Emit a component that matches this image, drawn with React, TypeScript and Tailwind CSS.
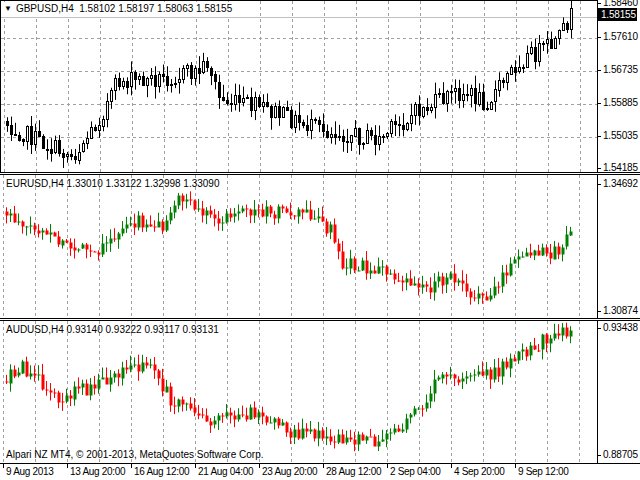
const W = 597

function rng(seed: number) {
  let s = seed
  return () => {
    s = (s * 1103515245 + 12345) % 2147483648
    return s / 2147483648
  }
}

function interp(pts: number[][], x: number) {
  for (let i = 0; i < pts.length - 1; i++) {
    const [x0, y0] = pts[i]
    const [x1, y1] = pts[i + 1]
    if (x >= x0 && x <= x1) return y0 + ((y1 - y0) * (x - x0)) / (x1 - x0)
  }
  return pts[pts.length - 1][1]
}

type Candle = { x: number; o: number; c: number; h: number; l: number }

function makeCandles(pts: number[][], seed: number, vol: number): Candle[] {
  const r = rng(seed)
  const out: Candle[] = []
  let prev = interp(pts, 5)
  for (let x = 5; x <= 571; x += 4) {
    const target = interp(pts, x + 4) + (r() - 0.5) * vol
    const o = prev
    const c = target
    const h = Math.min(o, c) - r() * vol * 0.7
    const l = Math.max(o, c) + r() * vol * 0.7
    out.push({ x, o, c, h, l })
    prev = c
  }
  return out
}

const p1 = makeCandles(
  [[5, 120], [40, 140], [75, 155], [100, 120], [120, 80], [160, 78], [200, 70], [210, 60], [222, 100], [260, 105], [300, 120], [320, 128], [380, 138], [420, 110], [460, 90], [490, 100], [520, 60], [550, 45], [560, 40], [572, 14]],
  7, 18,
)
const p2 = makeCandles(
  [[5, 36], [60, 66], [100, 80], [130, 46], [170, 50], [182, 18], [215, 46], [260, 36], [310, 36], [335, 56], [345, 86], [400, 100], [430, 112], [460, 100], [480, 126], [500, 110], [520, 82], [560, 76], [572, 62]],
  11, 14,
)
const p3 = makeCandles(
  [[5, 60], [25, 45], [60, 75], [100, 65], [150, 40], [175, 80], [215, 100], [260, 90], [290, 110], [380, 120], [420, 90], [440, 55], [470, 60], [500, 50], [530, 30], [560, 10], [572, 12]],
  23, 14,
)

function Grid({ h, rows }: { h: number; rows: number[] }) {
  const xs = Array.from({ length: 19 }, (_, i) => 3 + 32 * i)
  return (
    <g stroke="#a0a0a0" strokeDasharray="3 3" strokeWidth={1}>
      {xs.map((x) => (
        <line key={x} x1={x + 0.5} x2={x + 0.5} y1={0} y2={h} />
      ))}
      {rows.map((y) => (
        <line key={y} x1={0} x2={W} y1={y + 0.5} y2={y + 0.5} />
      ))}
    </g>
  )
}

function Candles({ data, mono }: { data: Candle[]; mono?: boolean }) {
  return (
    <g>
      {data.map((d, i) => {
        const up = d.c < d.o
        const top = Math.round(Math.min(d.o, d.c))
        const hgt = Math.max(1, Math.round(Math.abs(d.o - d.c)))
        const col = mono ? '#000' : up ? '#008000' : '#ff0000'
        return (
          <g key={i}>
            <line x1={d.x + 1.5} x2={d.x + 1.5} y1={d.h} y2={d.l} stroke={col} />
            <rect
              x={d.x + 0.5}
              y={top + 0.5}
              width={mono ? 2 : 3}
              height={hgt}
              fill={mono ? (up ? '#fff' : '#000') : col}
              stroke={mono ? '#000' : 'none'}
            />
          </g>
        )
      })}
    </g>
  )
}

function Axis({ labels }: { labels: [string, number][] }) {
  return (
    <div className="relative w-[43px] border-l border-black">
      {labels.map(([t, y]) => (
        <div key={t} className="absolute left-0 flex items-center" style={{ top: y - 7 }}>
          <div className="w-[3px] h-px bg-black" />
          <span className="pl-[2px] text-[10px] leading-[14px] tracking-[-0.2px]">{t}</span>
        </div>
      ))}
    </div>
  )
}

export default function App() {
  return (
    <div className="w-[640px] h-[480px] bg-white text-black flex flex-col overflow-hidden" style={{ fontFamily: '"Liberation Sans", Arial, sans-serif' }}>
      {/* Pane 1 */}
      <div className="flex h-[173px] border-b border-black">
        <div className="relative w-[597px] border-l border-t border-black">
          <svg width={W} height={172} className="absolute inset-0">
            <Grid h={172} rows={[37, 70, 103, 136]} />
            <line x1={0} x2={W} y1={16.5} y2={16.5} stroke="#c0c0c0" />
            <Candles data={p1} mono />
          </svg>
          <div className="absolute left-[3px] top-[1px] bg-white pr-1 text-[10px] leading-[14px] flex items-center gap-[4px]">
            <span className="text-[8px]">▼</span>
            <span>GBPUSD,H4&nbsp; 1.58102 1.58197 1.58063 1.58155</span>
          </div>
        </div>
        <Axis labels={[['1.58460', 3], ['1.57610', 37], ['1.56735', 70], ['1.55885', 103], ['1.55035', 136], ['1.54185', 168]]} />
      </div>
      <div className="relative">
        <div className="absolute left-[597px] -top-[165px] w-[40px] h-[13px] bg-black text-white text-[10px] leading-[13px] pl-[4px] tracking-[-0.2px]">1.58155</div>
      </div>
      <div className="h-px" />
      {/* Pane 2 */}
      <div className="flex h-[145px] border-y border-black">
        <div className="relative w-[597px]">
          <svg width={W} height={143} className="absolute inset-0">
            <Grid h={143} rows={[]} />
            <Candles data={p2} />
          </svg>
          <div className="absolute left-[6px] top-[2px] text-[10px] leading-[14px]">EURUSD,H4 1.33010 1.33122 1.32998 1.33090</div>
        </div>
        <Axis labels={[['1.34692', 9], ['1.30874', 136]]} />
      </div>
      <div className="h-px" />
      {/* Pane 3 */}
      <div className="flex h-[144px] border-y border-black">
        <div className="relative w-[597px]">
          <svg width={W} height={142} className="absolute inset-0">
            <Grid h={142} rows={[]} />
            <Candles data={p3} />
          </svg>
          <div className="absolute left-[6px] top-[2px] text-[10px] leading-[14px]">AUDUSD,H4 0.93140 0.93222 0.93117 0.93131</div>
          <div className="absolute left-[6px] bottom-[1px] text-[10px] leading-[14px]">Alpari NZ MT4, © 2001-2013, MetaQuotes Software Corp.</div>
        </div>
        <Axis labels={[['0.93438', 7], ['0.88705', 134]]} />
      </div>
      {/* Time axis */}
      <div className="relative h-[16px] w-[597px]">
        {['9 Aug 2013', '13 Aug 20:00', '16 Aug 12:00', '21 Aug 04:00', '23 Aug 20:00', '28 Aug 12:00', '2 Sep 04:00', '4 Sep 20:00', '9 Sep 12:00'].map((t, i) => (
          <div key={t} className="absolute top-0 flex items-start" style={{ left: 3 + 64 * i }}>
            <div className="w-px h-[4px] bg-black" />
            <span className="pl-[2px] pt-[1px] text-[10px] leading-[14px] whitespace-nowrap tracking-[-0.3px]">{t}</span>
          </div>
        ))}
      </div>
    </div>
  )
}
